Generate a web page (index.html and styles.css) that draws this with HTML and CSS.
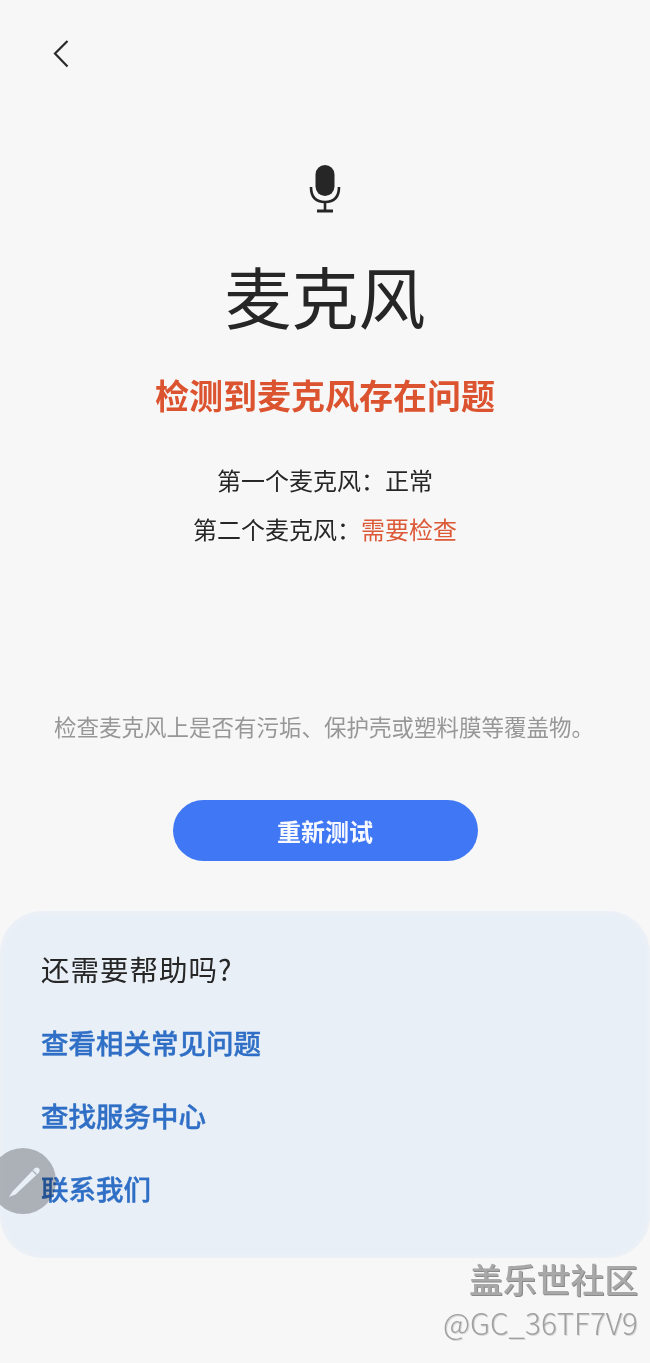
FILE: index.html
```html
<!DOCTYPE html>
<html lang="zh-CN">
<head>
    <meta charset="UTF-8">
    <meta name="viewport" content="width=device-width, initial-scale=1.0">
    <title>麦克风</title>
    <link rel="stylesheet" href="styles.css">
</head>
<body>
    <div class="page">
        <div class="top-bar">
            <svg class="back-icon" viewBox="0 0 18 30" width="18" height="30">
                <path d="M15.5 2 L3 14.5 L15.5 27.5" fill="none" stroke="#2a2a2a" stroke-width="2.2"/>
            </svg>
        </div>

        <!-- Test result -->
        <div class="result">
            <svg class="mic-icon" viewBox="0 0 34 50" width="34" height="50">
                <rect x="7.5" y="0" width="19" height="31" rx="9.5" fill="#262626"/>
                <path d="M3 22 C3 32 8 37 17 37 C26 37 31 32 31 22" fill="none" stroke="#262626" stroke-width="2.6"/>
                <path d="M17 37 V46" fill="none" stroke="#262626" stroke-width="2.6"/>
                <path d="M9 46 H25" fill="none" stroke="#262626" stroke-width="3"/>
            </svg>
            <h1>麦克风</h1>
            <h2>检测到麦克风存在问题</h2>
            <p class="status">第一个麦克风：正常</p>
            <p class="status">第二个麦克风：<span class="warn">需要检查</span></p>
        </div>

        <p class="hint">检查麦克风上是否有污垢、保护壳或塑料膜等覆盖物。</p>
        <button class="retest">重新测试</button>

        <!-- Help links -->
        <div class="help">
            <div class="help-title">还需要帮助吗?</div>
            <a class="help-link">查看相关常见问题</a>
            <a class="help-link">查找服务中心</a>
            <a class="help-link">联系我们</a>
        </div>

        <div class="edit-btn">
            <svg viewBox="0 0 36 36" width="36" height="36">
                <path d="M2 34 L5.5 28.5 L28 5 Q30.5 3.5 32.5 6 Q33 8 32 9.5 L8.5 31.5 Z" fill="#ffffff"/>
                <path d="M25.5 7.5 L29.5 11.5" stroke="#bcbcbe" stroke-width="1.2" fill="none"/>
            </svg>
        </div>

        <div class="watermark">
            <div class="wm-name">盖乐世社区</div>
            <div class="wm-user">@GC_36TF7V9</div>
        </div>
    </div>
</body>
</html>
```
FILE: styles.css
```css
* {
    margin: 0;
    padding: 0;
    box-sizing: border-box;
}

body {
    font-family: "Noto Sans CJK SC", "Noto Sans", sans-serif;
    background-color: #f7f7f7;
    color: #262626;
}

.page {
    position: relative;
    width: 650px;
    height: 1363px;
    overflow: hidden;
}

.top-bar {
    height: 165px;
    padding: 39px 0 0 52px;
}

.back-icon {
    display: block;
}

.result {
    display: flex;
    flex-direction: column;
    align-items: center;
}

.mic-icon {
    display: block;
}

h1 {
    font-size: 67px;
    font-weight: 400;
    line-height: 97px;
    margin-top: 31px;
}

h2 {
    font-size: 34px;
    font-weight: 700;
    line-height: 50px;
    color: #dc5330;
    margin-top: 27px;
}

.status {
    font-size: 24px;
    line-height: 49px;
}

.status:first-of-type {
    margin-top: 35px;
}

.warn {
    color: #dc5a38;
}

.hint {
    font-size: 22.5px;
    line-height: 34px;
    color: #979797;
    margin: 156px 0 0 54px;
    white-space: nowrap;
}

.retest {
    display: block;
    width: 305px;
    height: 61px;
    margin: 57px auto 0;
    border: none;
    border-radius: 31px;
    background-color: #3f77f4;
    color: #f7f9ff;
    font-family: inherit;
    font-size: 24px;
    font-weight: 700;
}

.help {
    height: 347px;
    margin-top: 50px;
    padding: 36px 41px 0;
    border-radius: 42px;
    background-color: #e9eff6;
    box-shadow: inset 0 0 6px #eff3f8;
}

.help-title {
    font-size: 28.5px;
    line-height: 44px;
    letter-spacing: 1px;
}

.help-link {
    display: block;
    font-size: 27.5px;
    font-weight: 500;
    line-height: 40px;
    color: #2f6fc6;
    -webkit-text-stroke: 0.4px #2f6fc6;
    margin-top: 33px;
}

.help-title + .help-link {
    margin-top: 31px;
}

.edit-btn {
    position: absolute;
    left: -10px;
    top: 1148px;
    width: 66px;
    height: 66px;
    padding: 15px 0 0 17px;
    border-radius: 50%;
    background-color: #bcbcbe;
    mix-blend-mode: multiply;
}

.watermark {
    position: absolute;
    right: 12px;
    top: 1257px;
    text-align: right;
}

.wm-name {
    font-size: 33.8px;
    font-weight: 500;
    line-height: 44px;
    color: #a8a8a8;
    text-shadow: 1px 1px 0 #8a8a8a;
}

.wm-user {
    font-size: 29.7px;
    font-weight: 300;
    line-height: 44px;
    color: #a0a0a0;
    text-shadow: 1px 1px 0 #d8d8d8;
}
```
